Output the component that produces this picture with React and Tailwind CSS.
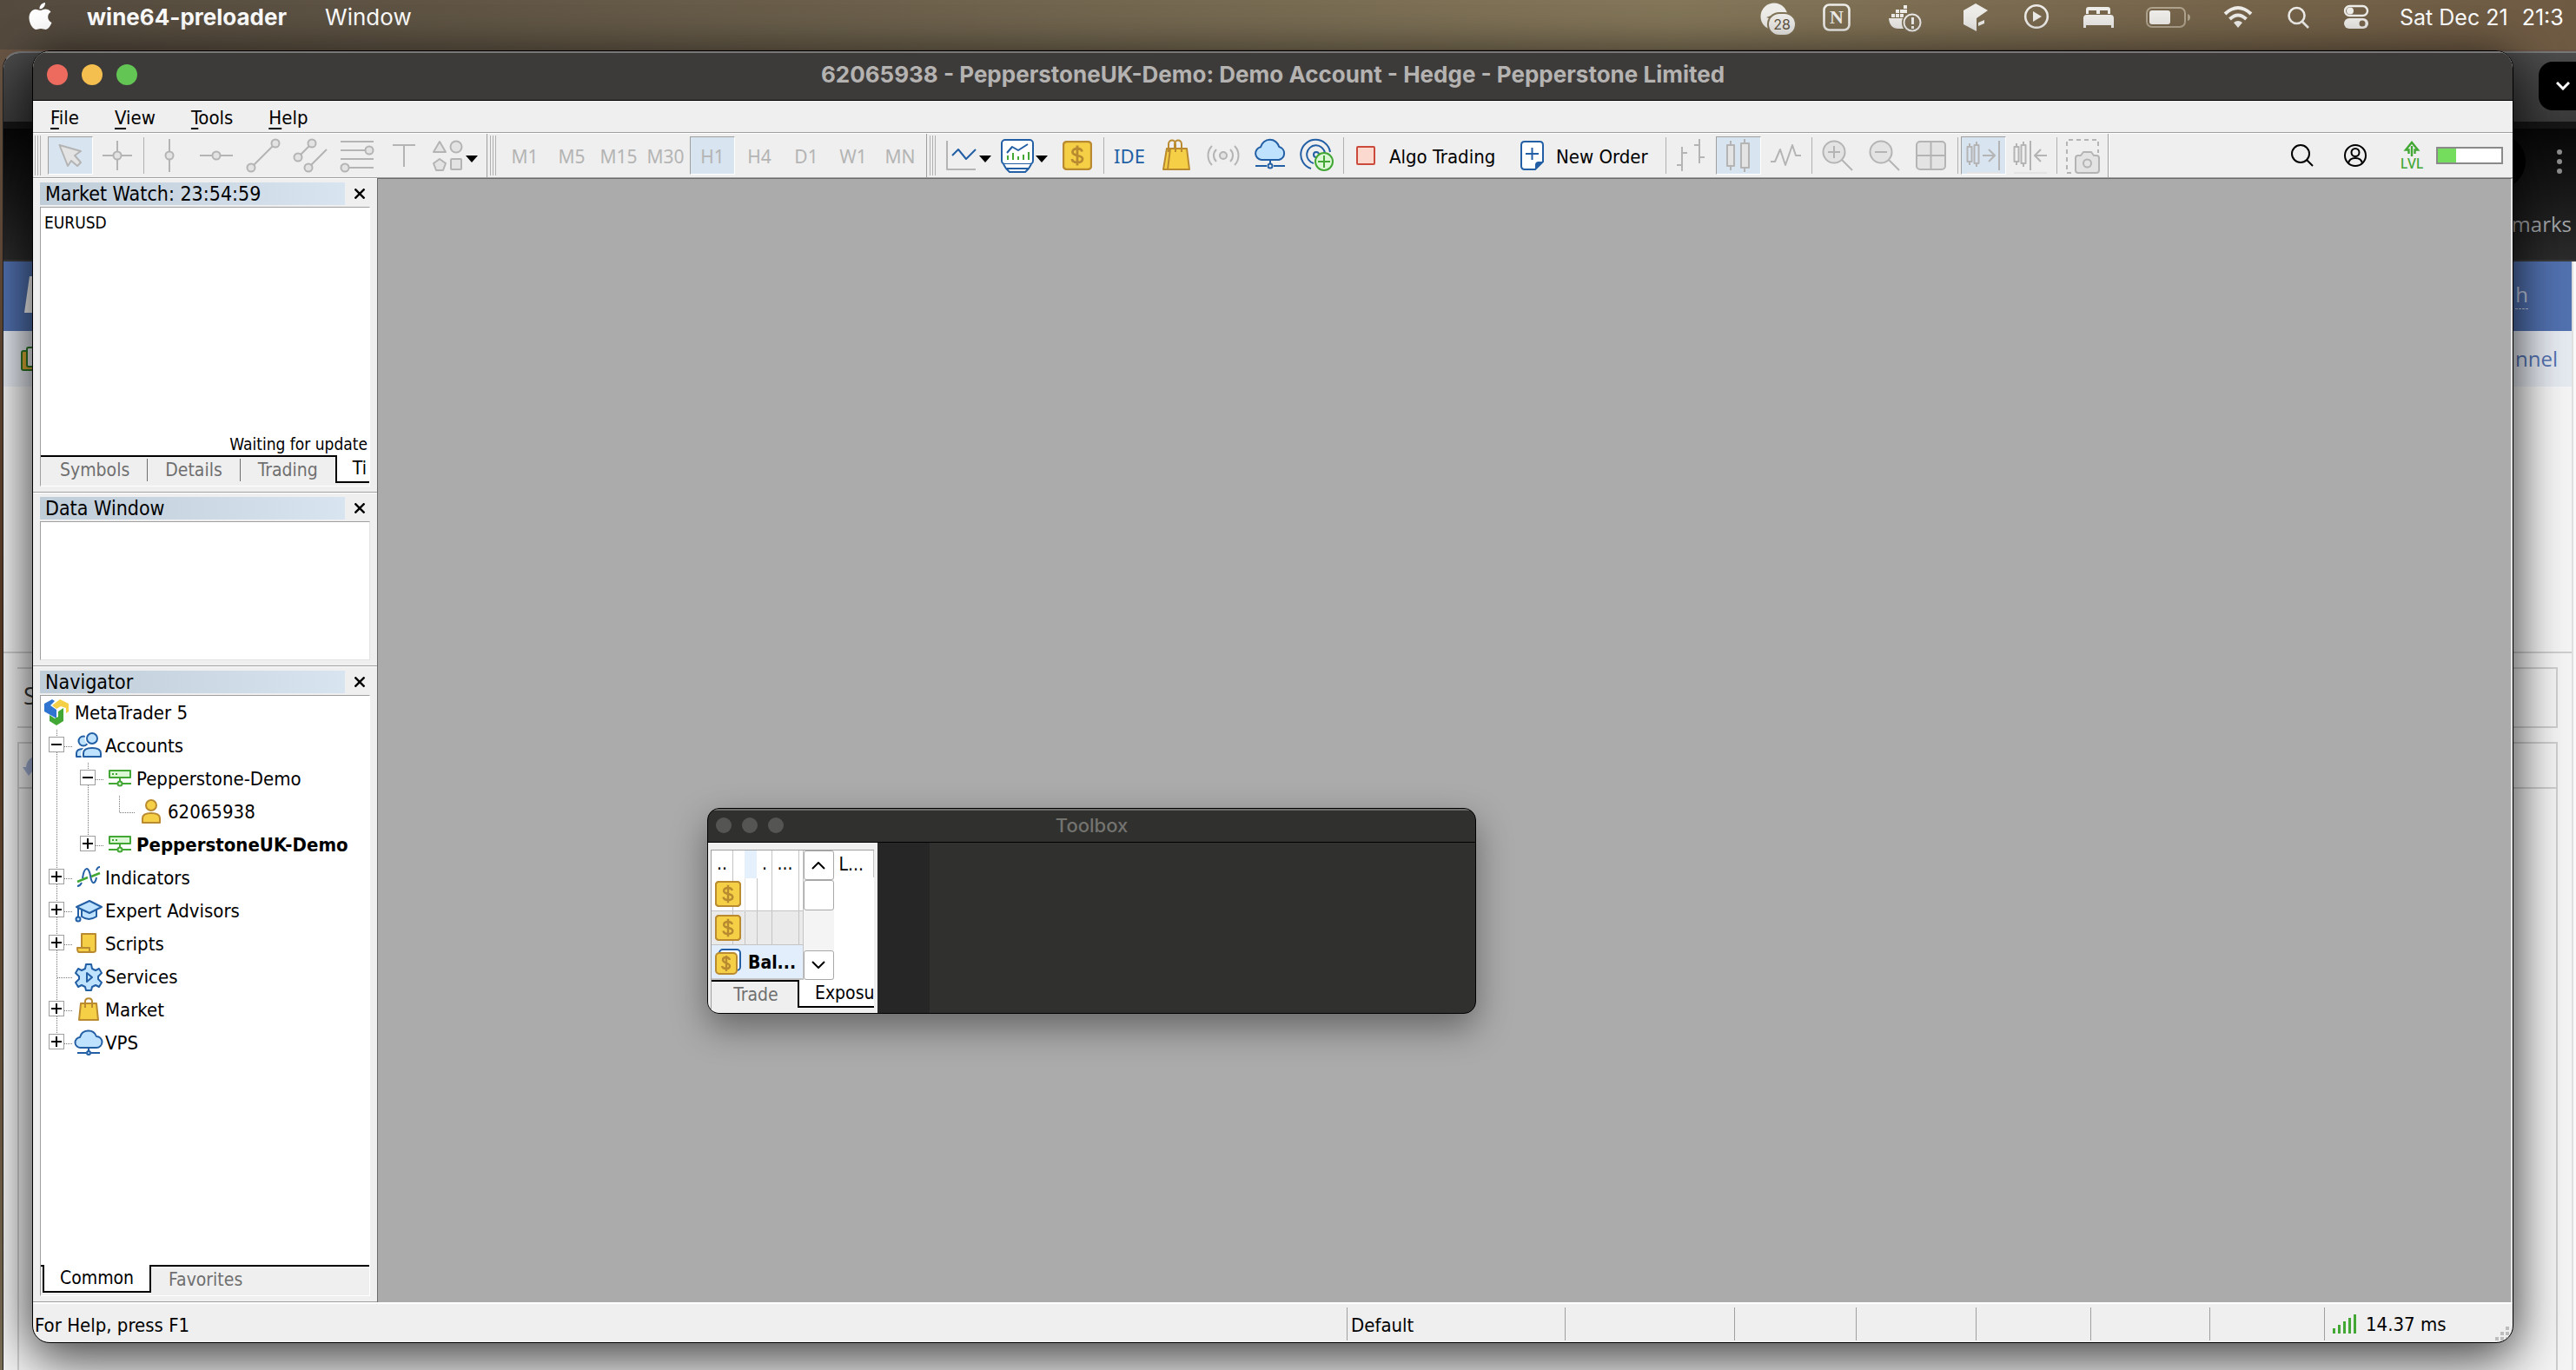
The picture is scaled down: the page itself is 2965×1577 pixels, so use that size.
const UI = "font-['DejaVu_Sans_Condensed','DejaVu_Sans',sans-serif]";

const GRAY = '#b4b4b4';
const BLUE = '#235fa4';
const GREEN = '#43a735';
const GOLD = '#b98a2f';

/* ---------- shared drawings ---------- */

function Icon({ children, stroke = GRAY, fill = 'none', width = 2 }) {
  return (
    <svg
      viewBox="0 0 38 44"
      className="h-[44px] w-[38px] shrink-0 overflow-visible"
      stroke={stroke}
      fill={fill}
      strokeWidth={width}
      strokeLinejoin="round"
      aria-hidden="true"
    >
      {children}
    </svg>
  );
}

function Caret() {
  return (
    <svg viewBox="0 0 14 8" className="h-[8px] w-[14px] shrink-0" aria-hidden="true">
      <path d="M0 0h14L7 8z" fill="#000" />
    </svg>
  );
}

function Coin({ className }) {
  return (
    <svg viewBox="0 0 34 34" className={className} aria-hidden="true">
      <rect x="1" y="1" width="32" height="32" rx="4" fill="#f5d046" stroke={GOLD} strokeWidth="2.4" />
      <path
        d="M22.500 12.500c-.6-2.400-2.800-3.500-5.500-3.500-3.200 0-5.500 1.500-5.500 4 0 5.500 11.500 2.500 11.500 8 0 2.600-2.500 4-6 4s-5.700-1.300-6.200-4M17 5.500v23"
        fill="none"
        stroke={GOLD}
        strokeWidth="2.800"
      />
    </svg>
  );
}

const CLOUD = 'M9 27a7.500 7.500 0 0 1-1-14.800A11 11 0 0 1 29.300 12 7.700 7.700 0 0 1 29 27z';

/* ---------- toolbar drawings ---------- */

const cursor = (
  <Icon fill="#e3e3e3">
    <path d="M6.500 10 31 17l-7 5 7 8-4 4-7-6-4 6z" />
  </Icon>
);
const crosshair = (
  <Icon>
    <path d="M19 5v12M19 27v12M2 22h12M24 22h12" />
    <circle cx="19" cy="22" r="4.500" fill="#e3e3e3" />
  </Icon>
);
const vline = (
  <Icon>
    <path d="M19 3v14M19 27v14" />
    <circle cx="19" cy="22" r="4.500" fill="#e3e3e3" />
  </Icon>
);
const hline = (
  <Icon>
    <path d="M0 22h14M24 22h14" />
    <circle cx="19" cy="22" r="4.500" fill="#e3e3e3" />
  </Icon>
);
const trend = (
  <Icon fill="#e3e3e3">
    <path d="M5 36 33 8" />
    <circle cx="33" cy="8" r="4.500" />
    <circle cx="5" cy="36" r="4.500" />
  </Icon>
);
const channel = (
  <Icon fill="#e3e3e3">
    <path d="M5 24 21 8M17 36l21-21" />
    <circle cx="21" cy="8" r="4.500" />
    <circle cx="5" cy="24" r="4.500" />
    <circle cx="17" cy="36" r="4.500" />
  </Icon>
);
const fibo = (
  <Icon fill="#e3e3e3">
    <path d="M0 6h38M0 16h38M0 26h38M0 36h38" />
    <circle cx="33" cy="16" r="4.500" />
    <circle cx="5" cy="36" r="4.500" />
  </Icon>
);
const letterT = (
  <Icon>
    <path d="M6 10h26M19 10v25" />
  </Icon>
);
const shapes = (
  <Icon fill="#e3e3e3">
    <path d="M10 6l7 12H3z" />
    <circle cx="29" cy="12" r="6.500" />
    <path d="M10 26l7 5-3 8H6l-3-8z" />
    <rect x="23" y="26" width="12" height="12" rx="1" />
  </Icon>
);
const chart = (
  <Icon>
    <path d="M3 5v33h33" />
    <path d="M9 22l7-7 9 11 11-11" stroke={BLUE} />
  </Icon>
);
const monitor = (
  <Icon stroke={BLUE}>
    <rect x="1" y="4" width="36" height="28" rx="4" fill="#fff" />
    <path d="M7 19l6-7 7 4 11-7" />
    <path d="M8 27v-5M14 27v-8M20 27v-4M26 27v-6M32 27v-9" stroke={GREEN} />
    <path d="M3 32l3 5h26l3-5M6 37l4 4h18l4-4" fill="#fff" />
  </Icon>
);
const bag = (
  <Icon stroke={GOLD}>
    <path d="M8 14h23l3 24H4z" fill="#f5d046" />
    <path d="M12 14c-1 8-2 16-3 24M10 18V9c0-6 8-6 8 0v9M17 14V9c0-6 8-6 8 0v9" />
  </Icon>
);
const signal = (
  <Icon>
    <circle cx="19" cy="22" r="4" fill="#e3e3e3" />
    <path d="M11 15c-4 4-4 10 0 14M27 15c4 4 4 10 0 14M6 11c-6 6-6 16 0 22M32 11c6 6 6 16 0 22" />
  </Icon>
);
const cloud = (
  <Icon stroke={BLUE}>
    <path d={CLOUD} fill="#bfe2ff" />
    <path d="M19 27v5M2 34h13M23 34h13" />
    <circle cx="19" cy="34" r="2.500" />
  </Icon>
);
const community = (
  <Icon stroke={BLUE}>
    <circle cx="18" cy="21" r="3" />
    <path d="M12 37a17 17 0 1 1 22-19M15 31a10.500 10.500 0 1 1 13-12" />
    <circle cx="27" cy="29" r="10" fill="#dcf7d6" stroke={GREEN} />
    <path d="M20 29h14M27 22v14" stroke={GREEN} />
  </Icon>
);
const bars = (
  <Icon>
    <path d="M8 12v28M2 33h6M8 19h6M28 3v28M22 10h6M28 24h6" />
  </Icon>
);
const candles = (
  <Icon fill="#e3e3e3">
    <path d="M10 5v34M26 3v38" />
    <rect x="6" y="10" width="8" height="24" />
    <rect x="22" y="8" width="9" height="28" />
  </Icon>
);
const zigzag = (
  <Icon>
    <path d="M2 29h5l6-14 6 18 8-23 4 12h6" />
  </Icon>
);
const zoomIn = (
  <Icon>
    <circle cx="15" cy="18" r="12.500" fill="#e3e3e3" />
    <path d="M24 27l12 12M8 18h14M15 11v14" />
  </Icon>
);
const zoomOut = (
  <Icon>
    <circle cx="15" cy="18" r="12.500" fill="#e3e3e3" />
    <path d="M24 27l12 12M8 18h14" />
  </Icon>
);
const tiles = (
  <Icon fill="#e3e3e3">
    <rect x="2" y="6" width="33" height="32" rx="4" />
    <path d="M18.500 6v32M2 22h33" />
  </Icon>
);
const shiftEnd = (
  <Icon>
    <path d="M3 8v4M3 29v4M11 6v4M11 31v4M37 5v34M18 22h13M25 15l7 7-7 7" />
    <rect x="0.500" y="12" width="5" height="17" />
    <rect x="8.500" y="10" width="5" height="21" />
    <path d="M0 42h38" stroke="#e3e3e3" />
  </Icon>
);
const autoScroll = (
  <Icon>
    <path d="M3 8v4M3 29v4M11 6v4M11 31v4M19 5v34M38 22H25M31 15l-7 7 7 7" />
    <rect x="0.500" y="12" width="5" height="17" />
    <rect x="8.500" y="10" width="5" height="21" />
    <path d="M0 42h38" stroke="#e3e3e3" />
  </Icon>
);
const camera = (
  <Icon>
    <path d="M6 42H1V4h36v15" strokeDasharray="5 4" />
    <path d="M11 25q0-3 3-3h3l3-4h9l3 4h3q3 0 3 3v14q0 3-3 3H14q-3 0-3-3z" fill="#e3e3e3" />
    <circle cx="24.500" cy="31" r="4.500" />
  </Icon>
);

/* ---------- toolbar ---------- */

function Grip({ first }) {
  return (
    <div
      className={
        first
          ? 'flex h-full w-[16px] shrink-0 gap-[2px] py-[2px] pl-[2px]'
          : 'flex h-full w-[17px] shrink-0 gap-[2px] border-l border-[#9f9f9f] py-[2px] pl-[3px]'
      }
    >
      <i className="w-px bg-[#b0b0b0]" />
      <i className="w-px bg-[#b0b0b0]" />
      <i className="w-px bg-[#b0b0b0]" />
    </div>
  );
}

function Separator() {
  return (
    <div className="flex w-[6px] shrink-0 justify-center self-stretch py-1">
      <i className="w-px bg-[#b0b0b0]" />
    </div>
  );
}

function Tool({ label, active, children }) {
  return (
    <button type="button" aria-label={label} className="flex w-[54px] shrink-0 items-center justify-center">
      <span
        className={
          active
            ? 'flex h-[44px] w-[52px] items-center justify-center border border-t-[#9f9f9f] border-r-white border-b-white border-l-[#9f9f9f] bg-[#d8e4ef]'
            : 'flex h-[44px] w-[52px] items-center justify-center'
        }
      >
        {children}
      </span>
    </button>
  );
}

const TIMEFRAMES = ['M1', 'M5', 'M15', 'M30', 'H1', 'H4', 'D1', 'W1', 'MN'];

function Toolbar() {
  return (
    <div className="flex h-[52px] shrink-0 items-center border-t border-b border-t-white border-b-[#9f9f9f]">
      <Grip first />
      <Tool label="Cursor" active>{cursor}</Tool>
      <Tool label="Crosshair">{crosshair}</Tool>
      <Separator />
      <Tool label="Vertical line">{vline}</Tool>
      <Tool label="Horizontal line">{hline}</Tool>
      <Tool label="Trendline">{trend}</Tool>
      <Tool label="Channel">{channel}</Tool>
      <Tool label="Fibonacci">{fibo}</Tool>
      <Tool label="Text label">{letterT}</Tool>
      <button type="button" aria-label="Shapes" className="flex w-[68px] shrink-0 items-center pl-1">
        {shapes}
        <span className="pt-2 pl-[2px]"><Caret /></span>
      </button>
      <Grip />
      {TIMEFRAMES.map((name) => (
        <Tool key={name} label={name} active={name === 'H1'}>
          <span className="pt-1 font-['Noto_Sans',sans-serif] text-[21px] text-[#b4b4b4]">{name}</span>
        </Tool>
      ))}
      <div className="w-[3px] shrink-0" />
      <Grip />
      <button type="button" aria-label="Charts" className="flex w-[65px] shrink-0 items-center pl-1">
        {chart}
        <span className="pt-2 pl-[2px]"><Caret /></span>
      </button>
      <button type="button" aria-label="Profiles" className="flex w-[65px] shrink-0 items-center pl-1">
        {monitor}
        <span className="pt-2 pl-[2px]"><Caret /></span>
      </button>
      <Tool label="Symbols"><Coin className="size-[34px]" /></Tool>
      <Separator />
      <Tool label="IDE">
        <span className="font-['Noto_Sans',sans-serif] text-[22px] text-[#235fa4]">IDE</span>
      </Tool>
      <Tool label="Market">{bag}</Tool>
      <Tool label="Signals">{signal}</Tool>
      <Tool label="VPS">{cloud}</Tool>
      <Tool label="Community">{community}</Tool>
      <Separator />
      <button type="button" className="flex w-[189px] shrink-0 items-center gap-4 pl-3 text-[22px] whitespace-nowrap">
        <i className="size-[22px] shrink-0 rounded-[2px] border-2 border-[#cc4a3b] bg-[#fbd9ce]" />
        <span className="pt-[3px]">Algo Trading</span>
      </button>
      <button type="button" className="flex w-[176px] shrink-0 items-center gap-[14px] pl-3 text-[22px] whitespace-nowrap">
        <svg viewBox="0 0 27 34" className="h-[34px] w-[27px] shrink-0" aria-hidden="true">
          <path d="M5 1h17q4 0 4 4v19l-9 9H5q-4 0-4-4V5q0-4 4-4z" fill="#fff" stroke={BLUE} strokeWidth="2" />
          <path d="M26 24l-9 9v-5q0-4 4-4z" fill={BLUE} />
          <path d="M6 15h15M13.500 8v14" stroke={BLUE} strokeWidth="2" />
        </svg>
        <span className="pt-[3px]">New Order</span>
      </button>
      <Separator />
      <Tool label="Bar chart">{bars}</Tool>
      <Tool label="Candlesticks" active>{candles}</Tool>
      <Tool label="Line chart">{zigzag}</Tool>
      <Separator />
      <Tool label="Zoom in">{zoomIn}</Tool>
      <Tool label="Zoom out">{zoomOut}</Tool>
      <Tool label="Tile windows">{tiles}</Tool>
      <Separator />
      <Tool label="Chart shift" active>{shiftEnd}</Tool>
      <Tool label="Auto scroll">{autoScroll}</Tool>
      <Separator />
      <Tool label="Screenshot">{camera}</Tool>
      <i className="ml-[2px] h-full w-[2px] border-l border-[#9f9f9f] bg-white" />

      <div className="ml-auto flex items-center pr-[11px]">
        <button type="button" aria-label="Search">
          <svg viewBox="0 0 26 26" className="size-[26px]" fill="none" stroke="#000" strokeWidth="2" aria-hidden="true">
            <circle cx="11" cy="11" r="10" />
            <path d="M18 18l7 7" />
          </svg>
        </button>
        <button type="button" aria-label="Account" className="ml-[35px]">
          <svg viewBox="0 0 26 26" className="size-[26px]" fill="none" stroke="#000" strokeWidth="2" aria-hidden="true">
            <circle cx="13" cy="13" r="12" />
            <circle cx="13" cy="9.500" r="4.500" />
            <path d="M5 22q1-6 8-6t8 6" />
          </svg>
        </button>
        <div className="ml-[36px] flex w-[32px] flex-col items-center">
          <svg viewBox="0 0 20 18" className="h-[18px] w-[20px]" fill="none" stroke={GREEN} strokeWidth="2.400" aria-hidden="true">
            <path d="M10 18V6M6.500 15v-4.500H3L10 2l7 8.500h-3.500V15" />
          </svg>
          <span className="font-['Noto_Sans',sans-serif] text-[16px] leading-[16px] font-medium text-[#43a735]">LVL</span>
        </div>
        <div className="ml-3 h-[20px] w-[77px] border-2 border-[#8a8a8a] bg-white">
          <div className="h-full w-[21px] bg-[#74dd5e]" />
        </div>
      </div>
    </div>
  );
}

/* ---------- side panels ---------- */

function PanelTitle({ children }) {
  return (
    <div className="mb-[2px] flex h-[26px] shrink-0 items-center">
      <h2 className="h-full flex-1 bg-linear-to-r from-[#bfcdd9] to-[#d8e4f0] pl-[6px] text-[23px] leading-[26px]">
        {children}
      </h2>
      <button type="button" aria-label={`Close ${children}`} className="flex w-[29px] justify-center pl-1">
        <svg viewBox="0 0 12 12" className="size-[12px]" stroke="#000" strokeWidth="2.400" aria-hidden="true">
          <path d="M0.500 0.500l11 11M11.500 0.500l-11 11" />
        </svg>
      </button>
    </div>
  );
}

function Tabs({ items, active }) {
  return (
    <div className="flex h-[35px] shrink-0 overflow-hidden bg-[#efefef]" role="tablist">
      <i className="w-[2px] shrink-0 border-t-2 border-black" />
      {items.map((item, idx) => {
        if (item === active) {
          const overflowing = idx === items.length - 1;
          return (
            <button
              key={item}
              type="button"
              role="tab"
              aria-selected="true"
              className={
                overflowing
                  ? 'h-[32px] flex-1 border-b-2 border-l-2 border-black bg-white pl-[18px] text-left text-[21px] leading-[30px]'
                  : 'h-[32px] shrink-0 border-x-2 border-b-2 border-black bg-white px-[18px] text-[21px] leading-[30px]'
              }
            >
              {item}
            </button>
          );
        }
        return (
          <button
            key={item}
            type="button"
            role="tab"
            className="flex h-[32px] shrink-0 items-center border-t-2 border-black text-[21px] leading-[26px] text-[#6f6f6f]"
          >
            <span
              className={items[idx + 1] && items[idx + 1] !== active ? 'border-r border-[#6f6f6f] px-5' : 'px-5'}
            >
              {item}
            </span>
          </button>
        );
      })}
      {items[items.length - 1] !== active && <i className="flex-1 border-t-2 border-black" />}
    </div>
  );
}

function Guide({ kind }) {
  const boxed = kind === 'plus' || kind === 'minus' || kind === 'lastPlus';
  const last = kind === 'lastPlus' || kind === 'corner';
  return (
    <svg viewBox="0 0 36 38" className="h-[38px] w-[36px] shrink-0" fill="none" strokeWidth="1" aria-hidden="true">
      <path d={last ? 'M18.500 0v19' : 'M18.500 0v38'} stroke="#777" strokeDasharray="1 1" />
      {kind !== 'line' && <path d="M19 19.500h18" stroke="#777" strokeDasharray="1 1" />}
      {boxed && <rect x="9.500" y="8.500" width="17" height="17" fill="#fff" stroke="#9f9f9f" />}
      {boxed && <path d="M12 17h12" stroke="#000" strokeWidth="2" />}
      {boxed && kind !== 'minus' && <path d="M18 11v12" stroke="#000" strokeWidth="2" />}
    </svg>
  );
}

function TreeIcon({ children, stroke = BLUE, fill = '#bfe2ff' }) {
  return (
    <svg
      viewBox="0 0 38 38"
      className="size-[38px] shrink-0"
      stroke={stroke}
      fill={fill}
      strokeWidth="2"
      strokeLinejoin="round"
      aria-hidden="true"
    >
      {children}
    </svg>
  );
}

const accountsIcon = (
  <TreeIcon>
    <circle cx="13" cy="13" r="5.500" />
    <path d="M5 31v-4q0-5 8-5v9z" />
    <circle cx="23" cy="10" r="6.500" stroke="#fff" strokeWidth="4" />
    <circle cx="23" cy="10" r="6" />
    <path d="M13 31v-4q0-6 10-6t10 6v4z" stroke="#fff" strokeWidth="5" />
    <path d="M13 31v-4q0-6 10-6t10 6v4z" />
  </TreeIcon>
);
const serverIcon = (
  <TreeIcon stroke={GREEN} fill="#dcf7d6">
    <path d="M7 9h24v8H7z" />
    <path d="M10 13h2M14 13h2M19 17v4M6 24h10M22 24h10" />
    <circle cx="19" cy="24" r="2.500" />
  </TreeIcon>
);
const userIcon = (
  <TreeIcon stroke={GOLD} fill="#f5d046">
    <circle cx="19" cy="11" r="6" />
    <path d="M9 31v-5q0-6 10-6t10 6v5z" />
  </TreeIcon>
);
const indicatorsIcon = (
  <TreeIcon fill="none">
    <path d="M6 28q3 0 5-4M12 19c2-14 7-14 9-3 2 13 6 8 7 2M28 10q1-4 4-4" />
    <path d="M6 23l12-5M22 17l10-4" stroke={GREEN} strokeWidth="2.500" />
  </TreeIcon>
);
const expertsIcon = (
  <TreeIcon>
    <path d="M11 17v8q8 6 17 0v-8" />
    <path d="M5 14l15-7 14 7-14 7zM7 15v11" />
    <circle cx="7" cy="28" r="2.500" />
  </TreeIcon>
);
const scriptsIcon = (
  <TreeIcon stroke={GOLD} fill="#f5d046">
    <path d="M11 7h16v19q0 2-3 2H8q-2 0-2-5h5z" />
    <path d="M6 23h14v3q0 2 3 2" />
  </TreeIcon>
);
const servicesIcon = (
  <TreeIcon>
    <path d="M16 4h6l1 5 4 2 4-2 3 5-4 4v3l4 4-3 5-4-2-4 2-1 4h-6l-1-4-4-2-4 2-3-5 4-4v-3l-4-4 3-5 4 2 4-2z" />
    <path d="M17 14l6 5-6 5z" />
  </TreeIcon>
);
const marketIcon = (
  <TreeIcon stroke={GOLD} fill="#f5d046">
    <path d="M10 11h18l2 19H8z" />
    <path d="M15 16V9c0-5 8-5 8 0v7" fill="none" />
  </TreeIcon>
);
const vpsIcon = (
  <TreeIcon>
    <path d="M10 24a6 6 0 0 1-1-12A10 10 0 0 1 28 11 6.500 6.500 0 0 1 28 24z" />
    <path d="M19 24v4M6 30h10M22 30h10" />
    <circle cx="19" cy="30" r="2" />
  </TreeIcon>
);

const TREE = [
  { label: 'Accounts', guides: ['minus'], icon: accountsIcon },
  { label: 'Pepperstone-Demo', guides: ['line', 'minus'], icon: serverIcon },
  { label: '62065938', guides: ['line', 'line', 'corner'], icon: userIcon },
  { label: 'PepperstoneUK-Demo', guides: ['line', 'lastPlus'], icon: serverIcon, bold: true },
  { label: 'Indicators', guides: ['plus'], icon: indicatorsIcon },
  { label: 'Expert Advisors', guides: ['plus'], icon: expertsIcon },
  { label: 'Scripts', guides: ['plus'], icon: scriptsIcon },
  { label: 'Services', guides: ['branch'], icon: servicesIcon },
  { label: 'Market', guides: ['plus'], icon: marketIcon },
  { label: 'VPS', guides: ['lastPlus'], icon: vpsIcon },
];

function Sidebar() {
  return (
    <aside className="flex w-[396px] shrink-0 flex-col border-t border-white">
      <section className="flex flex-col border-b border-[#9f9f9f] px-2 pt-1 pb-[6px]">
        <PanelTitle>Market Watch: 23:54:59</PanelTitle>
        <div className="flex h-[322px] flex-col border border-t-[#9f9f9f] border-r-white border-b-white border-l-[#9f9f9f]">
          <div className="flex flex-1 flex-col justify-between bg-white pt-1 pr-[2px] pl-[4px] text-[19px] leading-[26px]">
            <span>EURUSD</span>
            <span className="text-right">Waiting for update</span>
          </div>
          <Tabs items={['Symbols', 'Details', 'Trading', 'Ti']} active="Ti" />
        </div>
      </section>

      <section className="flex flex-col border-t border-b border-t-white border-b-[#9f9f9f] px-2 pt-[4px] pb-[6px]">
        <PanelTitle>Data Window</PanelTitle>
        <div className="h-[160px] border border-t-[#9f9f9f] border-r-[#e3e3e3] border-b-[#e3e3e3] border-l-[#9f9f9f] bg-white" />
      </section>

      <section className="flex min-h-0 flex-1 flex-col border-t border-b border-t-white border-b-[#9f9f9f] px-2 pt-[4px] pb-[6px]">
        <PanelTitle>Navigator</PanelTitle>
        <div className="flex min-h-0 flex-1 flex-col border border-t-[#9f9f9f] border-r-white border-b-white border-l-[#9f9f9f]">
          <ul className="flex-1 bg-white pt-px text-[22px] leading-[38px] whitespace-nowrap">
            <li className="flex h-[38px] items-center">
              <svg viewBox="0 0 36 38" className="h-[38px] w-[36px] shrink-0" aria-hidden="true">
                <path d="M4 8l9-5 3 2-5 5 7 5v10L4 17z" fill="#2f74d0" />
                <path d="M13 10l9-7 10 5v9l-3 2v-6l-6-2-5 3z" fill="#f5d046" />
                <path d="M20 17l6-4v15l-8 5-8-5v-7l6 4 4-2z" fill="#43a735" />
              </svg>
              <span className="pl-[3px]">MetaTrader 5</span>
            </li>
            {TREE.map((node) => (
              <li key={node.label} className="flex h-[38px] items-center">
                {node.guides.map((kind, idx) => (
                  <Guide key={idx} kind={kind} />
                ))}
                {node.icon}
                <span className={node.bold ? 'font-bold' : ''}>{node.label}</span>
              </li>
            ))}
          </ul>
          <Tabs items={['Common', 'Favorites']} active="Common" />
        </div>
      </section>
    </aside>
  );
}

/* ---------- floating toolbox ---------- */

function Toolbox() {
  return (
    <div className="absolute top-[724px] left-[379px] flex h-[237px] w-[885px] flex-col overflow-hidden rounded-[14px] border border-black bg-[#30302e] shadow-[0_16px_40px_rgba(0,0,0,0.4)]">
      <div className="grid h-[39px] shrink-0 grid-cols-3 items-center border-t-2 border-b border-t-[#6b6b69] border-b-black px-[9px] pb-[2px]">
        <div className="flex gap-3">
          <i className="size-[18px] rounded-full bg-[#555553]" />
          <i className="size-[18px] rounded-full bg-[#555553]" />
          <i className="size-[18px] rounded-full bg-[#555553]" />
        </div>
        <span className="text-center font-['Inter',sans-serif] text-[22px] leading-[32px] font-medium text-[#73736f]">Toolbox</span>
      </div>
      <div className="flex min-h-0 flex-1">
        <div className="flex w-[195px] shrink-0 flex-col bg-[#efefef] pt-2 pr-1 pb-1 pl-[3px]">
          <div className="flex flex-1 border-t border-l border-[#9f9f9f] bg-white">
            <table className="w-[105px] shrink-0 table-fixed border-collapse text-left text-[21px]">
              <colgroup>
                <col className="w-[24px]" />
                <col className="w-[14px]" />
                <col className="w-[14px]" />
                <col className="w-[17px]" />
                <col className="w-[31px]" />
                <col className="w-[5px]" />
              </colgroup>
              <thead>
                <tr className="h-[31px]">
                  <th className="border-r border-[#c4c4c4] pl-[6px] font-normal">..</th>
                  <th />
                  <th className="bg-[#e4f1fc]" />
                  <th className="border-r border-[#c4c4c4] pl-[6px] font-normal">.</th>
                  <th className="border-r border-[#c4c4c4] pl-[6px] font-normal">...</th>
                  <th className="border-r border-[#c4c4c4]" />
                </tr>
              </thead>
              <tbody>
                <tr className="h-[38px] border-b border-[#c4c4c4]">
                  <td className="border-r border-[#c4c4c4] pl-1"><Coin className="relative size-[30px] max-w-none" /></td>
                  <td className="border-r border-[#e3e3e3]" />
                  <td className="border-r border-[#c4c4c4]" />
                  <td className="border-r border-[#c4c4c4]" />
                  <td className="border-r border-[#c4c4c4]" />
                  <td className="border-r border-[#c4c4c4]" />
                </tr>
                <tr className="h-[39px] border-b border-[#c4c4c4] bg-[#eaeaea]">
                  <td className="border-r border-[#c4c4c4] pl-1"><Coin className="relative size-[30px] max-w-none" /></td>
                  <td className="border-r border-[#c4c4c4]" />
                  <td className="border-r border-[#c4c4c4]" />
                  <td className="border-r border-[#c4c4c4]" />
                  <td className="border-r border-[#c4c4c4]" />
                  <td className="border-r border-[#c4c4c4]" />
                </tr>
                <tr className="h-[39px] border-b-2 border-[#c4c4c4] bg-[#e3eefc]">
                  <td colSpan={6} className="border-r border-[#c4c4c4]">
                    <div className="flex items-center gap-2 pl-1 text-[21px] font-bold">
                      <svg viewBox="0 0 30 30" className="size-[30px] shrink-0" aria-hidden="true">
                        <rect x="5" y="1" width="24" height="24" rx="4" fill="#fff" stroke={BLUE} strokeWidth="2" />
                        <rect x="1" y="5" width="24" height="24" rx="4" fill="#f5d046" stroke={GOLD} strokeWidth="2" />
                        <path
                          d="M17 13c-1-4-8-4-8 0s8 3 8 7-8 4-9 0M13 8v18"
                          fill="none"
                          stroke={GOLD}
                          strokeWidth="2.400"
                        />
                      </svg>
                      <span className="pt-1">Bal...</span>
                    </div>
                  </td>
                </tr>
              </tbody>
            </table>
            <div className="flex w-[35px] shrink-0 flex-col bg-[#f4f4f4]">
              <button type="button" aria-label="Scroll up" className="flex h-[34px] items-center justify-center rounded-[3px] border border-[#a8a8a8] bg-white">
                <svg viewBox="0 0 16 9" className="h-[9px] w-[16px]" fill="none" stroke="#000" strokeWidth="2" aria-hidden="true"><path d="M1 8l7-7 7 7" /></svg>
              </button>
              <i className="h-[35px] rounded-[3px] border border-[#a8a8a8] bg-white" />
              <button type="button" aria-label="Scroll down" className="mt-auto flex h-[34px] items-center justify-center rounded-[3px] border border-[#a8a8a8] bg-white">
                <svg viewBox="0 0 16 9" className="h-[9px] w-[16px]" fill="none" stroke="#000" strokeWidth="2" aria-hidden="true"><path d="M1 1l7 7 7-7" /></svg>
              </button>
            </div>
            <span className="h-[31px] flex-1 border-r border-[#c4c4c4] pl-[6px] text-[21px] leading-[32px]">L...</span>
          </div>
          <div className="flex h-[35px] shrink-0 overflow-hidden border-l border-[#9f9f9f]" role="tablist">
            <button type="button" role="tab" className="h-[32px] w-[99px] shrink-0 border-t-2 border-black pl-[3px] text-[21px] leading-[30px] text-[#6f6f6f]">Trade</button>
            <button type="button" role="tab" aria-selected="true" className="h-[32px] flex-1 border-b-2 border-l-2 border-black bg-white pl-[18px] text-left text-[21px] leading-[31px]">Exposu</button>
          </div>
        </div>
        <div className="w-[60px] bg-[#262626]" />
      </div>
    </div>
  );
}

/* ---------- application window ---------- */

function StatusBar() {
  return (
    <footer className="flex h-[46px] shrink-0 border-t-2 border-t-white pt-1 pb-[2px] text-[22px] leading-[42px]">
      <span className="flex-1 pl-[2px]">For Help, press F1</span>
      <span className="w-[251px] border-l border-[#9f9f9f] pl-1">Default</span>
      <span className="w-[195px] border-l border-[#9f9f9f]" />
      <span className="w-[140px] border-l border-[#9f9f9f]" />
      <span className="w-[138px] border-l border-[#9f9f9f]" />
      <span className="w-[132px] border-l border-[#9f9f9f]" />
      <span className="w-[137px] border-l border-[#9f9f9f]" />
      <span className="w-[132px] border-l border-[#9f9f9f]" />
      <span className="flex w-[217px] items-center gap-[11px] border-l border-[#9f9f9f] pl-[9px]">
        <svg viewBox="0 0 27 22" className="h-[22px] w-[27px]" fill={GREEN} aria-hidden="true">
          <path d="M0 16h3v6H0zM6 12h3v10H6zM12 8h3v14h-3zM18 4h3v18h-3zM24 0h3v22h-3z" />
        </svg>
        <span className="pt-px">14.37 ms</span>
        <svg viewBox="0 0 16 16" className="mr-1 ml-auto size-[16px] self-end" fill="#bdbdbd" aria-hidden="true">
          <path d="M12 0h4v4h-4zM6 6h4v4H6zM12 6h4v4h-4zM0 12h4v4H0zM6 12h4v4H6zM12 12h4v4h-4z" />
        </svg>
      </span>
    </footer>
  );
}

function TerminalWindow() {
  return (
    <main
      className={`absolute top-[58px] right-[72px] bottom-[31px] left-[37px] flex flex-col overflow-hidden rounded-[20px] border border-black bg-[#efefef] text-black shadow-[0_24px_64px_rgba(0,0,0,0.55),0_0_48px_rgba(0,0,0,0.4)] ${UI}`}
    >
      <header className="flex h-[57px] shrink-0 items-center border-t-2 border-b border-t-[#7a7977] border-b-black bg-[#3d3b3a] px-4 pb-1">
        <div className="flex w-[120px] gap-4">
          <button type="button" aria-label="Close" className="size-[24px] rounded-full bg-[#ed6a5f]" />
          <button type="button" aria-label="Minimize" className="size-[24px] rounded-full bg-[#f5bf4f]" />
          <button type="button" aria-label="Zoom" className="size-[24px] rounded-full bg-[#62c554]" />
        </div>
        <h1 className="flex-1 pr-[120px] text-center font-['Inter',sans-serif] text-[26px] leading-[40px] font-bold whitespace-nowrap text-[#b5b3b1]">
          62065938 - PepperstoneUK-Demo: Demo Account - Hedge - Pepperstone Limited
        </h1>
      </header>
      <nav className="flex h-[37px] shrink-0 items-center gap-[41px] border-b border-[#9f9f9f] pt-1 pl-5 text-[22px] leading-[32px]">
        {['File', 'View', 'Tools', 'Help'].map((item) => (
          <button key={item} type="button">
            <span className="underline underline-offset-4">{item[0]}</span>
            {item.slice(1)}
          </button>
        ))}
      </nav>
      <Toolbar />
      <div className="flex min-h-0 flex-1">
        <Sidebar />
        <div className="relative flex-1 border-t border-r-2 border-l border-t-[#6b6b6b] border-r-[#e8e8e8] border-l-[#6b6b6b] bg-[#ababab]">
          <Toolbox />
        </div>
      </div>
      <StatusBar />
    </main>
  );
}

/* ---------- desktop ---------- */

function MenuBar() {
  const glyph = 'h-[40px] shrink-0 overflow-visible';
  return (
    <div className="flex h-[57px] gap-10 overflow-hidden bg-linear-to-r from-[#544a3e] via-[#837659] via-65% to-[#6e5a43] pl-[33px] font-['Inter',sans-serif] text-[26px] leading-[40px] whitespace-nowrap text-white">
      <svg viewBox="0 0 27 40" className={`${glyph} w-[27px]`} fill="#fff" aria-hidden="true">
        <path d="M19 3c.3 4-3 7.500-6.500 7.500C12 6.500 15.500 3.300 19 3z" />
        <path d="M13.500 12c1.500 0 3-1.500 6-1.500 2.300 0 4.500 1 6 3.200-5 3-4 10 1 12.300C25 30 22.300 34 19.500 34c-2 0-3-1-5.500-1s-3.500 1-5.300 1C5 34 .5 27 .5 20.500c0-6 3.700-9.800 7.500-9.800 2.500 0 4 1.300 5.500 1.300z" />
      </svg>
      <span className="pr-1 font-bold">wine64-preloader</span>
      <span>Window</span>

      <div className="ml-auto flex w-[939px] shrink-0 gap-10 overflow-hidden">
        <svg viewBox="0 0 32 40" className={`${glyph} w-[32px]`} fill="#f0eeeb" aria-hidden="true">
          <circle cx="16" cy="19" r="15.500" />
          <path d="M7 20l16-6-10 8z" fill="#837659" />
          <rect x="8" y="14" width="34" height="28" rx="14" fill="#837659" />
          <rect x="10" y="16" width="30" height="24" rx="12" />
          <text x="25" y="34" textAnchor="middle" fontSize="16" fontFamily="Inter, sans-serif" fill="#5f543f">28</text>
        </svg>
        <svg viewBox="0 0 36 40" className={`${glyph} w-[36px]`} aria-hidden="true">
          <rect x="1.500" y="5.500" width="29" height="29" rx="6" fill="none" stroke="#f0eeeb" strokeWidth="2.600" />
          <text x="16" y="27" textAnchor="middle" fontSize="22" fontWeight="700" fontFamily="Liberation Serif, serif" fill="#f0eeeb">N</text>
        </svg>
        <svg viewBox="0 0 46 40" className={`${glyph} w-[46px]`} fill="#f0eeeb" aria-hidden="true">
          <path d="M3 16h4v4H3zM8 16h4v4H8zM13 16h4v4h-4zM8 11h4v4H8zM13 11h4v4h-4zM17 6h4v4h-4zM17 11h4v4h-4zM0 21h22v12H11q-10 0-11-12z" />
          <circle cx="27" cy="26" r="12" fill="#80725a" />
          <circle cx="27" cy="26" r="9.500" fill="none" stroke="#f0eeeb" strokeWidth="2" />
          <path d="M26 20h3v8h-3zM26 30h3v3h-3z" />
        </svg>
        <svg viewBox="0 0 30 40" className={`${glyph} w-[30px]`} fill="#f0eeeb" aria-hidden="true">
          <path d="M14 4l14 8-13 9v15L0 28V12zM17 26l7-3v4l-7 3z" />
        </svg>
        <svg viewBox="0 0 28 40" className={`${glyph} w-[28px]`} fill="#f0eeeb" aria-hidden="true">
          <circle cx="14" cy="19" r="12.800" fill="none" stroke="#f0eeeb" strokeWidth="2.600" />
          <path d="M10 13l10 6-10 6z" />
        </svg>
        <svg viewBox="0 0 32 40" className={`${glyph} w-[32px]`} fill="#f0eeeb" aria-hidden="true">
          <path d="M3 16v-5q0-3 3-3h22q3 0 3 3v5h-3v-4h-9v4h-4v-4H6v4zM0 32V21q0-4 4-4h27q4 0 4 4v11h-3v-3H3v3z" />
        </svg>
        <svg viewBox="0 0 49 40" className={`${glyph} w-[49px]`} aria-hidden="true">
          <rect x="1" y="9" width="44" height="22" rx="6" fill="none" stroke="#b0a48f" strokeWidth="2" />
          <rect x="4" y="12" width="24" height="16" rx="3" fill="#f0eeeb" />
          <path d="M48 16q3 1 3 4t-3 4z" fill="#b0a48f" />
        </svg>
        <svg viewBox="0 0 34 40" className={`${glyph} w-[34px]`} fill="none" stroke="#f0eeeb" strokeWidth="4" aria-hidden="true">
          <path d="M2 16q15-14 30 0M7.500 22q9.500-9 19 0" />
          <path d="M12 26q5-4 10 0l-5 6z" fill="#f0eeeb" stroke="none" />
        </svg>
        <svg viewBox="0 0 25 40" className={`${glyph} w-[25px]`} fill="none" stroke="#f0eeeb" strokeWidth="2.600" aria-hidden="true">
          <circle cx="10.500" cy="18" r="9" />
          <path d="M17 25l7 7" />
        </svg>
        <svg viewBox="0 0 24 40" className={`${glyph} w-[24px]`} aria-hidden="true">
          <rect x="1" y="7" width="26" height="11" rx="5.500" fill="none" stroke="#f0eeeb" strokeWidth="2.400" />
          <circle cx="7" cy="12.500" r="4" fill="#f0eeeb" />
          <rect x="0" y="21" width="28" height="12" rx="6" fill="#f0eeeb" />
          <circle cx="21" cy="27" r="3.500" fill="#7a6750" />
        </svg>
        <span className="flex gap-4 text-[25px]">
          <span>Sat Dec 21</span>
          <span>21:3</span>
        </span>
      </div>
    </div>
  );
}

function BrowserBehind() {
  return (
    <div className="absolute top-[59px] right-0 bottom-0 left-[3px] flex flex-col overflow-hidden rounded-tl-[20px] border-t-2 border-l border-t-[#777] border-l-[#222] bg-[#f5f5f5] font-['Open_Sans',sans-serif]">
      <div className="flex h-[79px] shrink-0 items-center justify-end bg-linear-to-b from-[#4b4b4b] to-[#3a3a3a] pb-1">
        <div className="flex h-[56px] w-[43px] items-center justify-end rounded-l-[16px] bg-black pr-[7px]">
          <svg viewBox="0 0 16 10" className="h-[10px] w-[16px]" fill="none" stroke="#fff" strokeWidth="3" aria-hidden="true">
            <path d="M1 1l7 7 7-7" />
          </svg>
        </div>
      </div>
      <div className="flex h-[161px] shrink-0 flex-col items-end border-t-8 border-b-2 border-t-[#161616] border-b-[#3a3a3a] bg-linear-to-b from-[#080808] to-[#2b2b2b]">
        <div className="flex h-[76px] w-[120px] items-center justify-between pr-4">
          <i className="size-[62px] rounded-full bg-black" />
          <svg viewBox="0 0 6 28" className="h-[28px] w-[6px]" fill="#8e8e8e" aria-hidden="true">
            <circle cx="3" cy="3" r="3" />
            <circle cx="3" cy="14" r="3" />
            <circle cx="3" cy="25" r="3" />
          </svg>
        </div>
        <span className="pr-[5px] text-[24px] leading-[68px] text-[#a4a7ab]">marks</span>
      </div>
      <div className="flex min-h-0 flex-1">
        <div className="flex min-w-0 flex-1 flex-col">
          <div className="flex h-[80px] shrink-0 items-center justify-between bg-[#5171b0] pr-[50px] pb-1 pl-6">
            <svg viewBox="0 0 16 42" className="h-[42px] w-[16px]" fill="#fff" aria-hidden="true">
              <path d="M6 0h10v42H0z" />
            </svg>
            <a href="#lang" className="border-b border-dashed border-[#c3cde2] text-[24px] leading-[32px] text-[#c3cde2]">h</a>
          </div>
          <div className="flex h-[64px] shrink-0 items-center justify-between bg-[#e6eaf1] pr-[16px] pl-[20px]">
            <svg viewBox="0 0 30 28" className="h-[28px] w-[30px]" strokeWidth="2" stroke="#2f7a2a" aria-hidden="true">
              <rect x="1" y="5" width="20" height="22" rx="2" fill="#e0ae35" />
              <rect x="7" y="1" width="20" height="22" rx="2" fill="#f4f7fb" />
            </svg>
            <a href="#channel" className="text-[24px] text-[#5474b3]">nnel</a>
          </div>
          <div className="h-[307px] shrink-0 border-b-2 border-[#cfcfcf]" />
          <div className="flex min-h-0 flex-1 flex-col pt-4 pr-[16px] pl-4">
            <div className="mb-4 flex h-[70px] shrink-0 items-center border-2 border-l-0 border-[#cfcfcf] pb-1 pl-[7px] text-[27px] text-[#333]">S</div>
            <div className="flex-1 border-2 border-b-0 border-[#cfcfcf]">
              <div className="flex h-[52px] items-center border-b-2 border-[#cfcfcf] pl-1">
                <svg viewBox="0 0 24 24" className="size-[24px]" fill="#a9b9de" aria-hidden="true">
                  <path d="M4 14Q5 2 20 0v6q-9 1-9 8h4l-8 10-7-10z" />
                </svg>
              </div>
            </div>
          </div>
        </div>
        <div className="w-[5px] border-l-2 border-[#e0e0e0] bg-[#fafafa]" />
      </div>
    </div>
  );
}

export default function App() {
  return (
    <div className="relative h-screen overflow-hidden bg-linear-to-b from-[#6b5747] via-[#5b3a22] to-[#7d7057]">
      <MenuBar />
      <BrowserBehind />
      <TerminalWindow />
    </div>
  );
}
